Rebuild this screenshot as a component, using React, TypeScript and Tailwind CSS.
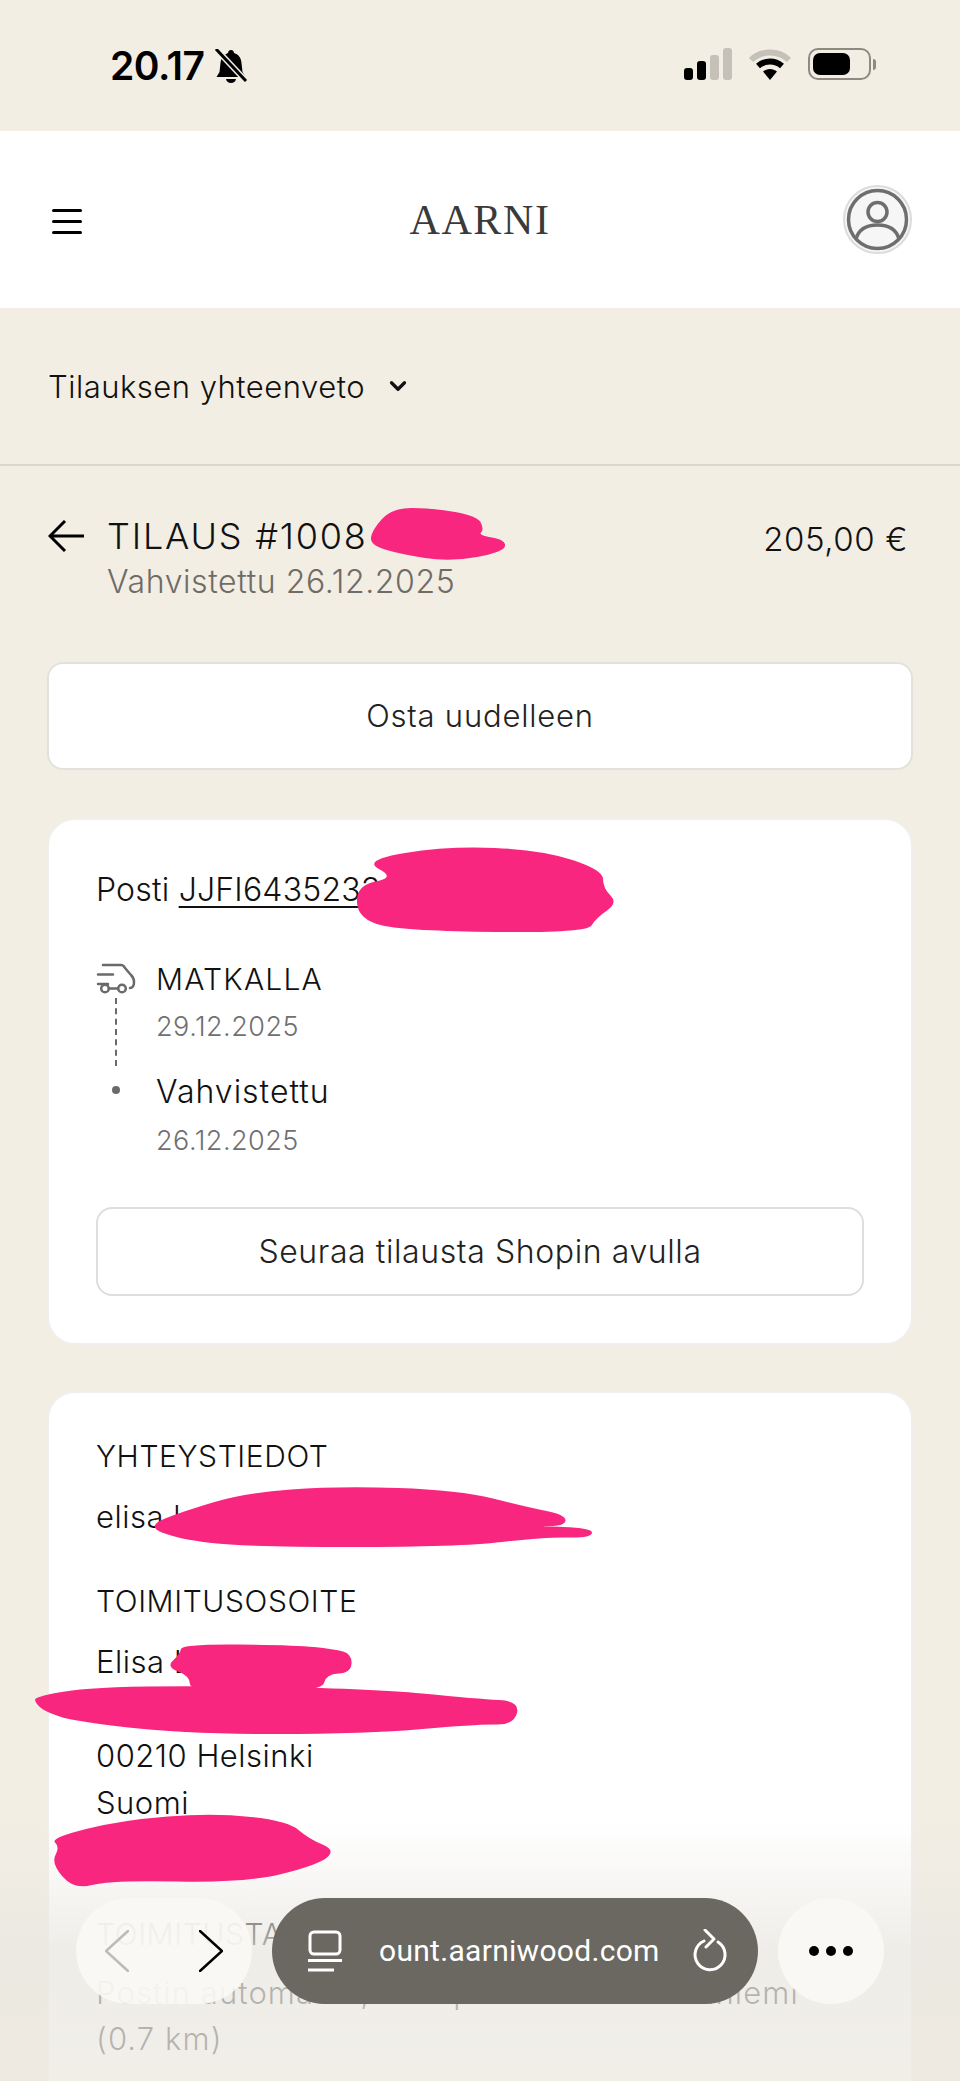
import React from 'react';
import { ChevronDown } from 'lucide-react';

const sans = "font-['Inter','Noto_Sans',sans-serif] font-light";

// smooth closed outline through the points, for the marker scribbles
const blob = (pts: number[][]) => {
  const mid = (a: number[], b: number[]) => [(a[0] + b[0]) / 2, (a[1] + b[1]) / 2];
  const start = mid(pts[pts.length - 1], pts[0]);
  let d = `M${start[0]} ${start[1]}`;
  pts.forEach((p, i) => {
    const m = mid(p, pts[(i + 1) % pts.length]);
    d += ` Q${p[0]} ${p[1]} ${m[0]} ${m[1]}`;
  });
  return d + ' Z';
};

const scribbles = [
  [[372, 530], [392, 508], [432, 508], [478, 516], [484, 530], [478, 535], [506, 540], [504, 552], [450, 562], [400, 554], [370, 545]],
  [[362, 860], [448, 846], [542, 850], [603, 870], [603, 888], [618, 903], [596, 918], [587, 933], [407, 931], [358, 920], [356, 885], [396, 878]],
  [[146, 1526], [184, 1511], [245, 1493], [337, 1486], [459, 1490], [527, 1507], [566, 1515], [565, 1526], [533, 1526], [593, 1528], [591, 1538], [545, 1537], [459, 1547], [245, 1547], [178, 1539]],
  [[182, 1644], [294, 1645], [334, 1649], [352, 1654], [351, 1673], [326, 1674], [322, 1692], [190, 1692], [190, 1676], [166, 1667], [180, 1654]],
  [[34, 1696], [110, 1685], [367, 1688], [478, 1699], [520, 1701], [514, 1725], [478, 1724], [367, 1734], [184, 1734], [73, 1721], [46, 1712], [36, 1704]],
  [[50, 1838], [122, 1820], [214, 1813], [288, 1821], [309, 1839], [336, 1850], [318, 1865], [245, 1883], [110, 1880], [74, 1890], [51, 1863], [60, 1847]],
];

const Scribbles = () => (
  <svg className="absolute top-0 left-0 w-[960px] h-[2081px] pointer-events-none" viewBox="0 0 960 2081" fill="#f8267e">
    {scribbles.map((s, i) => (
      <path key={i} d={blob(s)} />
    ))}
  </svg>
);

const StatusBar = () => (
  <div className="h-[131px] flex items-start justify-between pl-[110px] pr-[84px] pt-[44px]">
    <div className="flex items-center gap-[10px]">
      <span className="font-['Inter',sans-serif] font-semibold text-[39px] leading-[44px] tracking-[-0.5px] text-black">20.17</span>
      <svg className="w-[34px] h-[34px]" viewBox="0 0 34 34">
        <path d="M17 1c2 0 3 1.500 3 3 5 1.500 7 5 7.500 10l1 9 3 5H2.500l3-5 1-9C7 9 10 5.500 14 4c0-1.500 1-3 3-3z" fill="#000" />
        <path d="M12 30h10c-.5 2.500-2.500 4-5 4s-4.500-1.500-5-4z" fill="#000" />
        <path d="M3 1l29 31" stroke="#f2eee4" strokeWidth="6" />
        <path d="M2 0l30 32" stroke="#000" strokeWidth="3" />
      </svg>
    </div>
    <div className="flex items-center gap-[16px] pt-[4px]">
      <svg className="w-[48px] h-[32px]" viewBox="0 0 48 32">
        <rect x="0" y="20" width="9" height="12" rx="3" fill="#000" />
        <rect x="13" y="13" width="9" height="19" rx="3" fill="#000" />
        <rect x="26" y="7" width="9" height="25" rx="3" fill="#c5c1b9" />
        <rect x="39" y="0" width="9" height="32" rx="3" fill="#c5c1b9" />
      </svg>
      <svg className="w-[44px] h-[32px]" viewBox="0 0 44 32">
        <path d="M3 12C13 2 31 2 41 12" fill="none" stroke="#c5c1b9" strokeWidth="6" />
        <path d="M10 18c7-6 17-6 24 0" fill="none" stroke="#000" strokeWidth="6" />
        <path d="M15 23.500c4-3.500 10-3.500 14 0L22 32z" fill="#000" />
      </svg>
      <div className="flex items-center gap-[2px]">
        <div className="w-[63px] h-[32px] rounded-[10px] border-[2.5px] border-[#8f8a80] p-[3px]">
          <div className="w-[37px] h-full rounded-[7px] bg-black" />
        </div>
        <div className="w-[3px] h-[11px] rounded-r-[3px] bg-[#8f8a80]" />
      </div>
    </div>
  </div>
);

const Header = () => (
  <div className="h-[177px] bg-white flex items-center justify-between pl-[52px] pr-[48px]">
    <div className="w-[69px]">
      <div className="flex flex-col gap-[8px] w-[30px] mt-[4px]">
        <div className="h-[3px] rounded bg-black" />
        <div className="h-[3px] rounded bg-black" />
        <div className="h-[3px] rounded bg-black" />
      </div>
    </div>
    <span className="font-['Liberation_Serif',serif] text-[42px] leading-none tracking-[1.6px] text-[#3a3a3a] ml-[-4px]">AARNI</span>
    <svg className="w-[69px] h-[69px]" viewBox="0 0 69 69">
      <circle cx="34.500" cy="34.500" r="33.500" fill="#f6f6f6" stroke="#dcdcdc" strokeWidth="2" />
      <circle cx="34.500" cy="34.500" r="29" fill="none" stroke="#6e6e6e" strokeWidth="3.500" />
      <circle cx="34.500" cy="27" r="9.500" fill="none" stroke="#6e6e6e" strokeWidth="3.500" />
      <path d="M13 54c3-11 12-14 21.500-14S53 43 56 54" fill="none" stroke="#6e6e6e" strokeWidth="3.500" />
    </svg>
  </div>
);

const Step = ({ title, date, wide }: { title: string; date: string; wide?: boolean }) => (
  <div>
    <div className={wide ? 'text-[30px] leading-[34px] tracking-[1.2px] text-[#111]' : 'text-[32px] leading-[36px] tracking-[1px] text-[#111]'}>{title}</div>
    <div className="text-[27px] leading-[34px] tracking-[0.5px] mt-[14px] text-[#707070]">{date}</div>
  </div>
);

const Label = ({ children }: { children: React.ReactNode }) => (
  <div className="text-[30px] leading-[34px] tracking-[0.6px] text-[#111]">{children}</div>
);

const Toolbar = () => (
  <div className="absolute left-[76px] top-[1898px] w-[808px] h-[106px] flex gap-[20px]">
    <div className="w-[176px] h-full rounded-[53px] bg-[#faf8f5]/90 flex items-center justify-between pl-[29px] pr-[29px]">
      <svg className="w-[24px] h-[42px]" viewBox="0 0 24 42" fill="none" stroke="#bdbbb6" strokeWidth="2.500" strokeLinecap="round">
        <path d="M23 1L1 21l22 20" />
      </svg>
      <svg className="w-[24px] h-[42px]" viewBox="0 0 24 42" fill="none" stroke="#000" strokeWidth="2.500" strokeLinecap="round">
        <path d="M1 1l22 20L1 41" />
      </svg>
    </div>
    <div className="w-[486px] h-full rounded-[53px] bg-[#6b6861] flex items-center pl-[36px] pr-[30px]">
      <svg className="w-[34px] h-[42px] shrink-0" viewBox="0 0 34 42" fill="none" stroke="#fff" strokeWidth="3">
        <rect x="2" y="2" width="30" height="22" rx="4" />
        <path d="M0 30.500h34M0 40h26" />
      </svg>
      <span className="font-['Roboto',sans-serif] font-normal text-[30px] leading-[40px] tracking-[0.3px] text-white ml-[37px] flex-1 whitespace-nowrap">ount.aarniwood.com</span>
      <svg className="w-[36px] h-[44px] shrink-0" viewBox="0 0 36 44" fill="none" stroke="#fff" strokeWidth="3" strokeLinecap="round" strokeLinejoin="round">
        <path d="M12 12A15 15 0 1 0 26 13" />
        <path d="M13 1l9 9-8 8" />
      </svg>
    </div>
    <div className="w-[106px] h-full rounded-[53px] bg-[#faf8f5] flex items-center justify-center gap-[7px]">
      <div className="w-[10px] h-[10px] rounded-full bg-black" />
      <div className="w-[10px] h-[10px] rounded-full bg-black" />
      <div className="w-[10px] h-[10px] rounded-full bg-black" />
    </div>
  </div>
);

export default function App() {
  return (
    <div className={`relative w-[960px] h-[2081px] overflow-hidden bg-[#f2eee4] ${sans}`}>
      <StatusBar />
      <Header />

      <div className="h-[158px] border-b-2 border-[#d9d6cf] flex items-center gap-[20px] px-[48px]">
        <span className="text-[31px] tracking-[0.5px] text-[#111] mt-[2px]">Tilauksen yhteenveto</span>
        <ChevronDown className="w-[26px] h-[26px] text-[#111]" strokeWidth={3} />
      </div>

      <div className="px-[47px]">
        <div className="flex justify-between items-start pt-[48px] pl-[1px] pr-[5px]">
          <div className="flex gap-[23px]">
            <svg className="w-[36px] h-[32px] mt-[6px]" viewBox="0 0 36 32" fill="none" stroke="#000" strokeWidth="3">
              <path d="M36 16H2M17 1L2 16l15 15" />
            </svg>
            <div>
              <div className="text-[36px] leading-[44px] tracking-[1.8px] text-[#111]">TILAUS #1008</div>
              <div className="text-[32px] leading-[38px] tracking-[0.6px] text-[#6f6b66] mt-[5px]">Vahvistettu 26.12.2025</div>
            </div>
          </div>
          <span className="text-[33px] leading-[44px] tracking-[0.6px] text-[#111] mt-[3px]">205,00 €</span>
        </div>

        <div className="h-[108px] mt-[61px] bg-white border-2 border-[#e2e1dc] rounded-[16px] flex items-center justify-center text-[31px] tracking-[0.8px] text-[#222]">
          Osta uudelleen
        </div>

        <div className="h-[527px] mt-[48px] bg-white rounded-[28px] border-2 border-[#f0efec] pt-[48px] px-[47px]">
          <div className="text-[32px] leading-[44px] tracking-[0.2px] text-[#111]">
            Posti <span className="underline underline-offset-[5px] decoration-2">JJFI6435233</span>
          </div>
          <div className="flex mt-[50px]">
            <div className="w-[40px] flex flex-col items-center shrink-0">
              <svg className="w-[40px] h-[32px]" viewBox="6 8 40 32" fill="none" stroke="#6a6a6a" strokeWidth="2.500" strokeLinecap="round" strokeLinejoin="round">
                <path d="M13 11h18c2 0 3 1 4 3l6 7c2 2 3 4 3 7 0 4-1 6-4 6" />
                <path d="M8 20.500h15M8 30h10" />
                <circle cx="15" cy="34.500" r="3.800" />
                <circle cx="32" cy="34.500" r="3.800" />
                <path d="M19 34.500h9" />
              </svg>
              <div className="h-[68px] mt-[4px] border-l-2 border-dashed border-[#6a6a6a]" />
              <div className="w-[8px] h-[8px] mt-[20px] rounded-full bg-[#6a6a6a]" />
            </div>
            <div className="ml-[20px]">
              <Step title="MATKALLA" date="29.12.2025" wide />
              <div className="mt-[30px]">
                <Step title="Vahvistettu" date="26.12.2025" />
              </div>
            </div>
          </div>
          <div className="h-[89px] mt-[49px] border-2 border-[#dededc] rounded-[16px] flex items-center justify-center text-[32px] tracking-[0.6px] text-[#222]">
            Seuraa tilausta Shopin avulla
          </div>
        </div>

        <div className="h-[760px] mt-[46px] bg-white rounded-[28px] border-2 border-[#f0efec] pt-[46px] px-[47px]">
          <Label>YHTEYSTIEDOT</Label>
          <div className="text-[31px] tracking-[0.5px] leading-[40px] mt-[24px] text-[#111]">elisa.l</div>
          <div className="mt-[47px]">
            <Label>TOIMITUSOSOITE</Label>
          </div>
          <div className="text-[31px] tracking-[0.5px] leading-[47px] mt-[20px] text-[#111]">
            <div>Elisa L</div>
            <div className="h-[47px]" />
            <div>00210 Helsinki</div>
            <div>Suomi</div>
          </div>
          <div className="mt-[91px]">
            <Label>TOIMITUSTAPA</Label>
          </div>
          <div className="text-[31px] leading-[46px] tracking-[1.1px] mt-[19px] text-[#111] whitespace-nowrap">
            Postin automaatti, K-Supermarket Vuosaniemi
            <br />
            (0.7 km)
          </div>
        </div>
      </div>

      {/* bottom fade behind the browser bar */}
      <div className="absolute left-0 right-0 bottom-0 h-[260px] bg-gradient-to-b from-[#f2eee4]/0 via-[#e9e7e1]/75 to-[#ede9e1]/75" />
      <Scribbles />
      <Toolbar />
    </div>
  );
}
